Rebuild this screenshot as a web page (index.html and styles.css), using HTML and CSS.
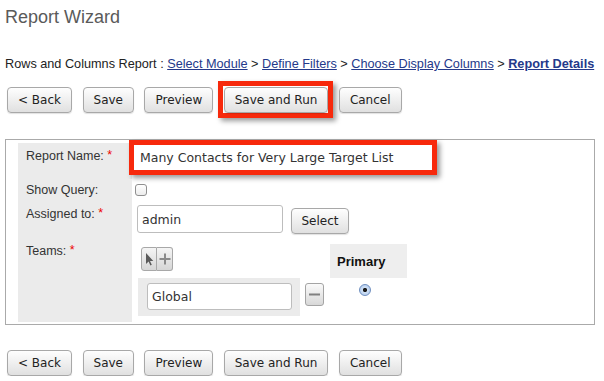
FILE: index.html
```html
<!DOCTYPE html>
<html>
<head>
<meta charset="utf-8">
<link rel="stylesheet" href="styles.css">
</head>
<body>
<div class="page">
  <h1 class="title">Report Wizard</h1>
  <div class="crumbs">Rows and Columns Report : <a href="#">Select Module</a> &gt; <a href="#">Define Filters</a> &gt; <a href="#">Choose Display Columns</a> &gt; <a href="#" class="current">Report Details</a></div>

  <div class="btns">
    <button class="btn">&lt; Back</button>
    <button class="btn">Save</button>
    <button class="btn">Preview</button>
    <span class="mark-btn"><button class="btn">Save and Run</button></span>
    <button class="btn">Cancel</button>
  </div>

  <div class="box">
    <div class="form">
      <div class="lbl l1">Report Name: <span class="req">*</span></div>
      <div class="val v1"><span class="mark-input"><input class="txt name" value="Many Contacts for Very Large Target List"></span></div>

      <div class="lbl l2">Show Query:</div>
      <div class="val v2"><span class="check"></span></div>

      <div class="lbl l3">Assigned to: <span class="req">*</span></div>
      <div class="val v3"><input class="txt user" value="admin"><button class="btn select">Select</button></div>

      <div class="lbl l4">Teams: <span class="req">*</span></div>
      <div class="val v4">
        <div class="teams">
          <div class="t-tools">
            <span class="mini arrow"><svg width="10" height="14" viewBox="0 0 10 14"><path d="M2 1 L2 12 L4.6 9.6 L6.4 13.4 L7.8 12.8 L6 9 L9.3 9 Z" fill="#5a5a5a"/></svg></span><span class="mini plus"><svg width="14" height="14" viewBox="0 0 14 14"><path d="M7 1.5 V12.5 M1.5 7 H12.5" stroke="#8a8a8a" stroke-width="2"/></svg></span>
          </div>
          <div class="t-gap"></div>
          <div class="t-head">Primary</div>
          <div class="t-name"><input class="txt team" value="Global"></div>
          <div class="t-del"><span class="minus"><svg width="11" height="3" viewBox="0 0 11 3"><rect x="0" y="0.5" width="11" height="2" fill="#808080"/></svg></span></div>
          <div class="t-prim"><span class="radio"></span></div>
        </div>
      </div>
    </div>
  </div>

  <div class="btns bottom">
    <button class="btn">&lt; Back</button>
    <button class="btn">Save</button>
    <button class="btn">Preview</button>
    <button class="btn">Save and Run</button>
    <button class="btn">Cancel</button>
  </div>
</div>
</body>
</html>
```

FILE: styles.css
```css
html, body {
  margin: 0;
  padding: 0;
  background: #fff;
}
.page {
  padding: 0 9px 0 5px;
  font-family: "Liberation Sans", Arial, sans-serif;
  font-size: 12.5px;
  color: #222;
}
.title {
  margin: 0;
  padding-top: 6px;
  font-size: 18px;
  line-height: 22px;
  font-weight: normal;
  color: #5a5a5a;
}
.crumbs {
  margin-top: 28px;
  line-height: 16px;
  font-size: 12.7px;
  white-space: nowrap;
  color: #222;
}
.crumbs a {
  color: #24398a;
  text-decoration: underline;
}
.crumbs a.current {
  font-weight: bold;
}
.btns {
  display: flex;
  align-items: flex-start;
  gap: 10.5px;
  margin-top: 15px;
  margin-left: 2px;
}
.btns.bottom {
  margin-top: 25px;
}
.btn {
  display: block;
  height: 26px;
  box-sizing: border-box;
  padding: 0 10px;
  font-family: "DejaVu Sans", sans-serif;
  font-size: 12px;
  color: #222;
  background: linear-gradient(#fefefe, #e0e0e0);
  border: 1px solid #a8a8a8;
  border-radius: 4px;
  box-shadow: 0 1px 1px rgba(0,0,0,0.12);
}
.mark-btn {
  display: block;
  margin: -6px -5px -4px -6px;
  padding: 1px 0 0 1px;
  border: 5px solid #f7290c;
  box-shadow: 3px 3px 5px rgba(0,0,0,0.4);
}
.box {
  margin-top: 25px;
  border: 1px solid #aaaaaa;
  padding: 3px 0 2px 12px;
}
.form {
  display: grid;
  grid-template-columns: 114px 1fr;
  grid-template-rows: 36px 22px 37px 84px;
}
.lbl {
  background: #ebebeb;
  padding-left: 8px;
  line-height: 16px;
  color: #333;
}
.req {
  color: #e00;
  position: relative;
  top: -1px;
}
.l1 { padding-top: 5px; }
.l2 { padding-top: 3px; }
.l3 { padding-top: 5px; }
.l4 { padding-top: 5px; }
.val {
  padding-left: 5px;
}
.v1 { padding-top: 2px; }
.v2 { padding-top: 5px; }
.v3 { padding-top: 4px; display: flex; align-items: flex-start; gap: 8px; }
.v4 { padding-top: 6px; }
.txt {
  box-sizing: border-box;
  margin: 0;
  font-family: "DejaVu Sans", sans-serif;
  font-size: 12.5px;
  color: #333;
  border: 1px solid #bdbdbd;
  border-radius: 3px;
  background: #fff;
  padding: 0 0 0 4px;
  outline: none;
}
.mark-input {
  display: block;
  width: 298px;
  height: 25px;
  margin: -5px 0 0 -8px;
  border: 5px solid #f7290c;
  box-shadow: 3px 3px 5px rgba(0,0,0,0.4);
}
.name {
  display: block;
  width: 298px;
  height: 25px;
  padding-left: 6px;
  border: none;
  border-radius: 0;
}
.check {
  display: block;
  margin-left: -2px;
  width: 12px;
  height: 12px;
  box-sizing: border-box;
  border: 1px solid #8f8f8f;
  border-radius: 3px;
  background: linear-gradient(#fff, #ececec);
}
.user {
  width: 146px;
  height: 28px;
}
.select {
  margin-top: 3px;
  width: 58px;
  padding: 0;
}
.teams {
  margin-left: 1px;
  display: grid;
  grid-template-columns: 162px 30px 77px;
  grid-template-rows: 34px 38px;
}
.t-tools {
  padding: 3px 0 0 3px;
  display: flex;
  align-items: flex-start;
}
.mini {
  width: 16px;
  height: 24px;
  box-sizing: border-box;
  border: 1px solid #a8a8a8;
  background: linear-gradient(#f5f5f5, #d6d6d6);
  display: flex;
  align-items: center;
  justify-content: center;
}
.mini.arrow {
  border-radius: 3px 0 0 3px;
}
.mini.plus {
  border-left: none;
  border-radius: 0 3px 3px 0;
}
.t-head {
  background: #eeeeee;
  font-weight: bold;
  font-size: 13px;
  color: #111;
  padding-left: 7px;
  display: flex;
  align-items: center;
}
.t-name {
  background: #ebebeb;
  padding: 5px 0 0 9px;
}
.team {
  width: 145px;
  height: 27px;
}
.t-del {
  padding: 5px 0 0 5px;
}
.minus {
  width: 19px;
  height: 23px;
  box-sizing: border-box;
  border: 1px solid #a4a4a4;
  border-radius: 3px;
  background: linear-gradient(#fafafa, #d8d8d8);
  display: flex;
  align-items: center;
  justify-content: center;
}
.t-prim {
  padding: 6px 0 0 29px;
}
.radio {
  display: block;
  width: 12px;
  height: 12px;
  box-sizing: border-box;
  border-radius: 50%;
  border: 1px solid #6f8fc0;
  background: radial-gradient(circle, #1a1a1a 0 1.8px, #cfe0f5 2.4px, #a8c3e8 100%);
}
```
